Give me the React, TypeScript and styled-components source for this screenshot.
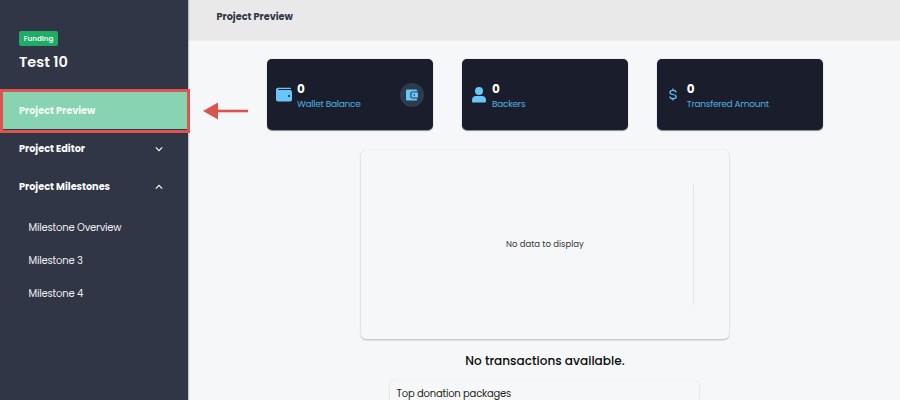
import React from "react";
import styled, { createGlobalStyle } from "styled-components";

const GlobalStyle = createGlobalStyle`
  * { box-sizing: border-box; }
  body {
    margin: 0;
    overflow: hidden;
    background: #f6f7f9;
    font-family: Poppins, Inter, "Open Sans", sans-serif;
  }
`;

const Page = styled.div`
  display: flex;
  width: 900px;
  height: 400px;
  overflow: hidden;
`;

const Sidebar = styled.aside`
  position: relative;
  flex: 0 0 188px;
  height: 400px;
  padding-top: 31px;
  background: #303646;
  box-shadow: 1px 0 1px rgba(0, 0, 0, 0.2);
`;

const ProjectHead = styled.div`
  display: flex;
  flex-direction: column;
  align-items: flex-start;
  height: 60px;
  padding-left: 19px;
`;

const Badge = styled.span`
  width: 39px;
  height: 15px;
  border-radius: 2px;
  background: #1eac66;
  color: #e9f8f0;
  font-size: 7.1px;
  font-weight: 600;
  line-height: 15px;
  text-align: center;
`;

const ProjectName = styled.h1`
  margin: 5px 0 0;
  color: #fbfbfc;
  font-size: 14.5px;
  font-weight: 600;
  line-height: 22px;
  white-space: nowrap;
`;

const NavItem = styled.div<{ $active?: boolean }>`
  display: flex;
  align-items: center;
  justify-content: space-between;
  height: 38px;
  padding: 1px 25px 0 19px;
  background: ${(p) => (p.$active ? "#88d3b1" : "transparent")};
  color: ${(p) => (p.$active ? "#f1faf5" : "#fafafb")};
  font-size: 9.7px;
  font-weight: 700;
  white-space: nowrap;
`;

const SubNav = styled.div`
  display: flex;
  flex-direction: column;
  padding: 5.5px 0 0 28.5px;
`;

const SubItem = styled.div`
  height: 33.3px;
  color: #eeeff1;
  font-size: 10px;
  font-weight: 400;
  line-height: 33.3px;
  letter-spacing: -0.18px;
  white-space: nowrap;
`;

const Highlight = styled.div`
  position: absolute;
  z-index: 2;
  top: 89px;
  left: 0;
  width: 190px;
  height: 44px;
  border: 3px solid #dc544f;
`;

const Pointer = styled.svg`
  position: absolute;
  z-index: 2;
  top: 102px;
  left: 203px;
`;

const Main = styled.main`
  flex: 1;
  display: flex;
  flex-direction: column;
  min-width: 0;
`;

const TopBar = styled.header`
  flex: 0 0 41px;
  padding: 9px 0 0 28.5px;
  border-bottom: 1px solid #eeeeef;
  background: #e9e9e9;
  color: #303746;
  font-size: 9.7px;
  font-weight: 700;
  line-height: 16px;
`;

const Stats = styled.section`
  display: flex;
  flex-shrink: 0;
  gap: 28.5px;
  padding: 18px 0 0 79px;
`;

const StatCard = styled.div`
  display: flex;
  align-items: center;
  flex: 0 0 166.4px;
  height: 71px;
  padding: 0 9px;
  border-radius: 5px;
  background: #1a1e2c;
  box-shadow: 0 0.5px 1px rgba(0, 0, 0, 0.45);
`;

const StatIcon = styled.div<{ $width: number }>`
  display: flex;
  justify-content: center;
  width: ${(p) => p.$width}px;
`;

const StatText = styled.div<{ $gap: number }>`
  flex: 1;
  padding: 3px 0 0 ${(p) => p.$gap}px;
  white-space: nowrap;
`;

const StatValue = styled.div`
  color: #fff;
  font-size: 12px;
  font-weight: 700;
  line-height: 16px;
`;

const StatLabel = styled.div`
  color: #4faee2;
  font-size: 9px;
  line-height: 15px;
  letter-spacing: -0.27px;
`;

const RoundButton = styled.div`
  display: grid;
  place-items: center;
  width: 24px;
  height: 24px;
  border-radius: 50%;
  background: #2c3c4e;
`;

const ChartCard = styled.section`
  display: grid;
  grid-template-columns: 1fr 1px;
  align-items: center;
  flex: 0 0 189px;
  width: 368.5px;
  margin: 20px 0 0 172.7px;
  padding-right: 35.5px;
  border-radius: 5px;
  background: #f6f7f9;
  box-shadow: 0 1px 2px rgba(0, 0, 0, 0.24), 0 0 1px rgba(0, 0, 0, 0.12);
`;

const EmptyText = styled.div`
  padding-left: 36.5px;
  color: #38393b;
  font-size: 8.5px;
  text-align: center;
`;

const AxisLine = styled.div`
  height: 120px;
  background: #e3e4e6;
`;

const NoTransactions = styled.h2`
  flex-shrink: 0;
  width: 368.5px;
  margin: 13px 0 0 172.7px;
  color: #0c0c0d;
  font-size: 12.1px;
  font-weight: 500;
  line-height: 18px;
  text-align: center;
`;

const Packages = styled.section`
  flex: 0 0 60px;
  width: 309px;
  margin: 10px 0 0 202px;
  padding: 5px 6.5px;
  border-radius: 5px;
  background: #f6f7f9;
  box-shadow: 0 1px 2px rgba(0, 0, 0, 0.2), 0 0 1px rgba(0, 0, 0, 0.1);
  color: #1e1f20;
  font-size: 10px;
  line-height: 17px;
  letter-spacing: -0.2px;
`;

function Chevron({ up }: { up?: boolean }) {
  return (
    <svg width="8" height="6" viewBox="0 0 8 6" fill="none" stroke="#f4f5f6" strokeWidth="1.3">
      <path d={up ? "M.8 4.6 4 1.4 7.2 4.6" : "M.8 1.4 4 4.6 7.2 1.4"} />
    </svg>
  );
}

function WalletIcon() {
  return (
    <svg width="16" height="15" viewBox="0 0 16 15">
      <path
        fill="#68c6f8"
        fillRule="evenodd"
        d="M2 .7h12q1 0 1 1v.4H2.3v.8H14q2 0 2 1.8v8q0 1.8-1.8 1.8H2Q0 14.5 0 12.5V2.7Q0 .7 2 .7ZM13 8a1 1 0 1 0 0 2 1 1 0 0 0 0-2Z"
      />
    </svg>
  );
}

function PersonIcon() {
  return (
    <svg width="14" height="16" viewBox="0 0 14 16" fill="#68c6f8">
      <circle cx="7" cy="4" r="4" />
      <path d="M4 9h6q4 0 4 4.6V14.6q0 1-1 1H1q-1 0-1-1V13.6Q0 9 4 9Z" />
    </svg>
  );
}

function DollarIcon() {
  return (
    <svg width="8" height="13" viewBox="0 0 8 13" fill="none" stroke="#68c6f8" strokeWidth="1.25">
      <path d="M4 .4V2.5M4 10.500V12.600M7 4.500C7 3 5.800 2.400 4 2.400S1 3.100 1 4.400 2.100 6.200 4 6.500 7.100 7.400 7.100 8.700 5.900 10.600 4 10.600 .9 9.900 .9 8.400" />
    </svg>
  );
}

function PocketIcon() {
  return (
    <svg width="12" height="12" viewBox="0 0 12 12" fill="#68c6f8" fillRule="evenodd">
      <path d="M1.2.5H10q1.200 0 1.200 1.200V2.500H6Q4.300 2.500 4.300 4.200V7.800Q4.300 9.500 6 9.500H11.200V10.300Q11.200 11.500 10 11.500H1.200Q0 11.500 0 10.300V1.700Q0 .5 1.200.5Z" />
      <path d="M5.400 3.500H12V8.500H5.400ZM8.300 5.200a.8.8 0 1 0 0 1.600.8.8 0 0 0 0-1.600Z" />
    </svg>
  );
}

export default function App() {
  return (
    <>
      <GlobalStyle />
      <Page>
        <Sidebar>
          <ProjectHead>
            <Badge>Funding</Badge>
            <ProjectName>Test 10</ProjectName>
          </ProjectHead>
          <NavItem $active>Project Preview</NavItem>
          <NavItem>
            Project Editor
            <Chevron />
          </NavItem>
          <NavItem>
            Project Milestones
            <Chevron up />
          </NavItem>
          <SubNav>
            <SubItem>Milestone Overview</SubItem>
            <SubItem>Milestone 3</SubItem>
            <SubItem>Milestone 4</SubItem>
          </SubNav>
          <Highlight />
          <Pointer width="46" height="18" viewBox="0 0 46 18">
            <path d="M0 9 15 .5v17Z" fill="#dc544f" />
            <path d="M14 9H45" stroke="#dc544f" strokeWidth="2.6" />
          </Pointer>
        </Sidebar>
        <Main>
          <TopBar>Project Preview</TopBar>
          <Stats>
            <StatCard>
              <StatIcon $width={16}>
                <WalletIcon />
              </StatIcon>
              <StatText $gap={5}>
                <StatValue>0</StatValue>
                <StatLabel>Wallet Balance</StatLabel>
              </StatText>
              <RoundButton>
                <PocketIcon />
              </RoundButton>
            </StatCard>
            <StatCard>
              <StatIcon $width={16}>
                <PersonIcon />
              </StatIcon>
              <StatText $gap={5}>
                <StatValue>0</StatValue>
                <StatLabel>Backers</StatLabel>
              </StatText>
            </StatCard>
            <StatCard>
              <StatIcon $width={15}>
                <DollarIcon />
              </StatIcon>
              <StatText $gap={6}>
                <StatValue>0</StatValue>
                <StatLabel>Transfered Amount</StatLabel>
              </StatText>
            </StatCard>
          </Stats>
          <ChartCard>
            <EmptyText>No data to display</EmptyText>
            <AxisLine />
          </ChartCard>
          <NoTransactions>No transactions available.</NoTransactions>
          <Packages>Top donation packages</Packages>
        </Main>
      </Page>
    </>
  );
}
